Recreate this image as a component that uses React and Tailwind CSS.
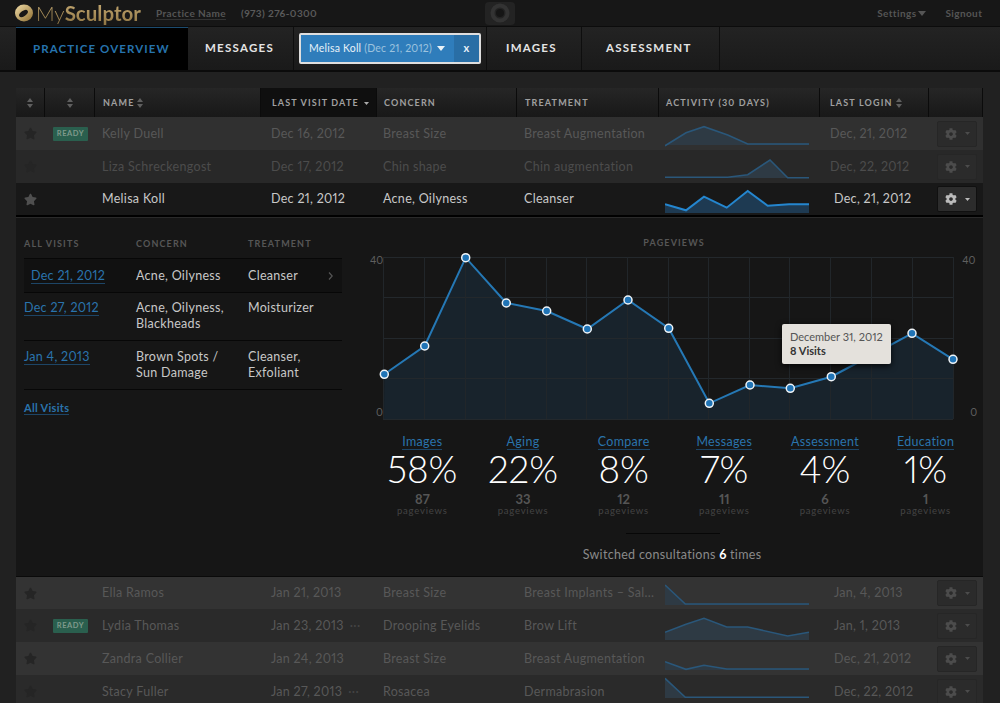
import React from "react";
import { FaCog, FaStar } from "react-icons/fa";

const font = { fontFamily: '"Lato", "Liberation Sans", sans-serif' };

function Sort({ c = "#666" }) {
  return (
    <svg width="6" height="10" viewBox="0 0 6 10" className="shrink-0">
      <path d="M3 0 L6 4 L0 4 Z M3 10 L6 6 L0 6 Z" fill={c} />
    </svg>
  );
}

function Spark({ pts, bottom = 32, strong }) {
  const line = pts.map((p) => p.join(",")).join(" ");
  const area = `0,${bottom} ${line} 144,${bottom}`;
  return (
    <svg width="146" height="33" viewBox="0 0 146 33" className="block">
      <polygon points={area} fill={strong ? "#1e3a52" : "#2e3a44"} />
      <polyline points={line} fill="none" stroke={strong ? "#2486cf" : "#2a577a"} strokeWidth={strong ? 2 : 1.6} />
    </svg>
  );
}

function GearButton({ strong }) {
  return (
    <div className={`flex h-[26px] w-[40px] items-center justify-center gap-[8px] rounded-[2px] border ${strong ? "border-[#101010] bg-[#2c2c2c] text-[#bbb]" : "border-[#262626] bg-[#2b2b2b] text-[#4c4c4c]"}`}>
      <FaCog size={12} />
      <svg width="5" height="3" viewBox="0 0 5 3"><path d="M0 0H5L2.500 3Z" fill="currentColor" /></svg>
    </div>
  );
}

function Row({ row }) {
  const s = row.selected;
  const txt = s ? "text-[#c8c8c8]" : row.faint ? "text-[#4c4c4c]" : "text-[#585858]";
  return (
    <div className={`flex items-center text-[12.500px] tracking-[0.3px] ${row.h} ${row.bg} ${txt}`}>
      <div className={`flex w-[29px] justify-center pr-[1px] ${s ? "text-[#4f4f4f]" : "text-[#252525]"}`}><FaStar size={13} /></div>
      <div className="w-[50px] pl-[8px]">
        {row.ready && (
          <div className="flex h-[14px] w-[35px] items-center justify-center rounded-[1px] bg-[#2a5f4e] text-[7.500px] font-bold tracking-[0.6px] text-[#7f9a8c]">READY</div>
        )}
      </div>
      <div className="w-[166px] pl-[7px] pt-[1px]">{row.name}</div>
      <div className="flex w-[116px] items-center pl-[10px] pt-[1px]">
        <span>{row.date}</span>
        {row.dots && <span className="ml-[6px] leading-none text-[#444]">···</span>}
      </div>
      <div className="w-[140px] pl-[6px] pt-[1px]">{row.concern}</div>
      <div className="w-[142px] truncate pl-[7px] pt-[1px]">{row.treatment}</div>
      <div className="w-[161px] pl-[6px]"><Spark pts={row.pts} strong={s} bottom={row.bottom} /></div>
      <div className={`w-[109px] pt-[1px] ${row.loginPl}`}>{row.login}</div>
      <div className="w-[54px] pl-[8px]"><GearButton strong={s} /></div>
    </div>
  );
}

const topRows = [
  { name: "Kelly Duell", ready: true, date: "Dec 16, 2012", concern: "Breast Size", treatment: "Breast Augmentation", login: "Dec, 21, 2012", loginPl: "pl-[10px]", h: "h-[33px]", bg: "bg-[#303030]", bottom: 28,
    pts: [[0, 28.7], [21, 15.7], [39, 9.7], [62.7, 18], [82.7, 27], [144, 27]] },
  { name: "Liza Schreckengost", faint: true, date: "Dec 17, 2012", concern: "Chin shape", treatment: "Chin augmentation", login: "Dec, 22, 2012", loginPl: "pl-[10px]", h: "h-[33px]", bg: "bg-[#282828]", bottom: 28,
    pts: [[0, 27.3], [62.7, 27.3], [82.7, 24.7], [105, 10], [122.7, 27.7], [144, 27.7]] },
  { name: "Melisa Koll", selected: true, date: "Dec 21, 2012", concern: "Acne, Oilyness", treatment: "Cleanser", login: "Dec, 21, 2012", loginPl: "pl-[14px]", h: "h-[32px]", bg: "bg-[#181818]", bottom: 30,
    pts: [[0, 21.3], [21, 27.3], [39, 13.7], [61.7, 24.7], [82.7, 8], [102.7, 22.7], [124, 21.3], [144, 21.3]] },
];

const bottomRows = [
  { name: "Ella Ramos", date: "Jan 21, 2013", concern: "Breast Size", treatment: "Breast Implants – Sal...", login: "Jan, 4, 2013", loginPl: "pl-[14px]", h: "h-[32px]", bg: "bg-[#333333]", bottom: 28,
    pts: [[0, 8], [20.3, 27], [144, 27]] },
  { name: "Lydia Thomas", ready: true, dots: true, date: "Jan 23, 2013", concern: "Drooping Eyelids", treatment: "Brow Lift", login: "Jan, 1, 2013", loginPl: "pl-[14px]", h: "h-[33px]", bg: "bg-[#2a2a2a]", bottom: 31,
    pts: [[0, 23.3], [21, 15.3], [39, 9.3], [61.7, 18], [82.7, 18], [122.7, 27], [144, 23.3]] },
  { name: "Zandra Collier", date: "Jan 24, 2013", concern: "Breast Size", treatment: "Breast Augmentation", login: "Dec, 21, 2012", loginPl: "pl-[14px]", h: "h-[33px]", bg: "bg-[#333333]", bottom: 28,
    pts: [[0, 19.7], [21, 27.3], [39, 23.3], [61.7, 27], [144, 27]] },
  { name: "Stacy Fuller", dots: true, date: "Jan 27, 2013", concern: "Rosacea", treatment: "Dermabrasion", login: "Dec, 22, 2012", loginPl: "pl-[14px]", h: "h-[33px]", bg: "bg-[#2a2a2a]", bottom: 23,
    pts: [[0, 3.3], [20.3, 22.3], [144, 22.3]] },
];

const heads = [
  { w: "w-[29px]", sort: true, center: true },
  { w: "w-[50px]", sort: true, center: true },
  { w: "w-[166px]", label: "NAME", sort: true, pl: "pl-[8px]" },
  { w: "w-[116px]", label: "LAST VISIT DATE", active: true, pl: "pl-[11px]" },
  { w: "w-[140px]", label: "CONCERN", pl: "pl-[7px]" },
  { w: "w-[142px]", label: "TREATMENT", pl: "pl-[8px]" },
  { w: "w-[161px]", label: "ACTIVITY (30 DAYS)", pl: "pl-[7px]" },
  { w: "w-[109px]", label: "LAST LOGIN", sort: true, pl: "pl-[10px]" },
  { w: "w-[54px]" },
];

function Header() {
  return (
    <div className="flex h-[29px] bg-[#141414]">
      {heads.map((h, i) => (
        <div
          key={i}
          className={`flex items-center gap-[3px] whitespace-nowrap border-r border-[#0b0b0b] pt-[1px] text-[9px] font-bold tracking-[1.150px] text-[#a0a0a0] ${h.w} ${h.pl || ""} ${h.center ? "justify-center" : ""} ${h.active ? "bg-[#0f0f0f]" : "bg-gradient-to-b from-[#262626] to-[#181818]"}`}
        >
          {h.label && <span>{h.label}</span>}
          {h.sort && <Sort c="#5f5f5f" />}
          {h.active && (
            <svg width="5" height="3" viewBox="0 0 5 3" className="ml-[2px]"><path d="M0 0H5L2.500 3Z" fill="#aaa" /></svg>
          )}
        </div>
      ))}
    </div>
  );
}

const visits = [
  { d: "Dec 21, 2012", c: ["Acne, Oilyness"], t: ["Cleanser"], active: true, cls: "h-[34px] items-center bg-[#111111]" },
  { d: "Dec 27, 2012", c: ["Acne, Oilyness,", "Blackheads"], t: ["Moisturizer"], cls: "pb-[8px] pt-[7px]" },
  { d: "Jan 4, 2013", c: ["Brown Spots /", "Sun Damage"], t: ["Cleanser,", "Exfoliant"], cls: "pb-[8px] pt-[8px]" },
];

function Visits() {
  return (
    <div className="w-[318px] shrink-0">
      <div className="flex h-[40px] items-start pt-[21px] text-[9px] font-bold leading-[10px] tracking-[1.150px] text-[#565656]">
        <div className="w-[112px]">ALL VISITS</div>
        <div className="w-[112px]">CONCERN</div>
        <div>TREATMENT</div>
      </div>
      <div className="border-t border-[#070707]">
        {visits.map((v) => (
          <div
            key={v.d}
            className={`flex border-b border-[#070707] text-[12.500px] leading-[16px] tracking-[0.3px] text-[#c8c8c8] ${v.cls}`}
          >
            <div className={`w-[112px] ${v.active ? "pl-[7px]" : ""}`}>
              <span className="border-b border-[#1d4566] text-[#2a74ad]">{v.d}</span>
            </div>
            <div className="w-[112px]">{v.c.map((x) => <div key={x}>{x}</div>)}</div>
            <div className="flex-1">{v.t.map((x) => <div key={x}>{x}</div>)}</div>
            {v.active && (
              <svg width="5" height="8" viewBox="0 0 5 8" className="mr-[9px]"><path d="M1 0.500L4.200 4L1 7.500" fill="none" stroke="#555" strokeWidth="1.200" /></svg>
            )}
          </div>
        ))}
      </div>
      <div className="mt-[10px] text-[11px] font-bold tracking-[0.3px] text-[#2a74ad]">
        <span className="border-b border-[#1d4566]">All Visits</span>
      </div>
    </div>
  );
}

/* chart coordinates: origin at page (388, 258) */
const chartPts = [
  [1.3, 117.3], [41.7, 89], [82.7, 0.7], [123.3, 46], [163.7, 54], [204.3, 72], [245, 43], [285.7, 71.3],
  [326.3, 146.3], [367, 128], [407.3, 131.3], [448.3, 119.7], [489, 98], [529, 76.3], [570, 102.3],
];

function Chart() {
  const line = chartPts.map((p) => p.join(",")).join(" ");
  return (
    <div className="relative ml-[46px] w-[572px] pt-[20px]">
      <div className="text-center text-[9px] font-bold leading-[10px] tracking-[1.150px] text-[#565656]">PAGEVIEWS</div>
      <div className="mt-[4px] flex text-[10.500px] leading-[12px] text-[#5f5f5f]">
        <div className="-ml-[16px] flex h-[170px] w-[16px] flex-col justify-between pb-[4px] pt-[2px]">
          <div className="-ml-[2px]">40</div>
          <div className="ml-[4px]">0</div>
        </div>
        <svg width="574" height="166" viewBox="0 0 574 166" className="mt-[5px] block shrink-0 overflow-visible">
          <polygon points={`1,162 ${line} 570,162`} fill="#18232c" />
          {[0, 40, 81, 121, 162].map((y) => (
            <line key={y} x1="0" x2="570" y1={y + 0.5} y2={y + 0.5} stroke="#23282c" />
          ))}
          {[0, 41, 82, 122, 163, 203, 244, 285, 325, 366, 406, 447, 488, 529, 570].map((x) => (
            <line key={x} x1={x + 0.5} x2={x + 0.5} y1="0" y2="162" stroke="#21262a" />
          ))}
          <polyline points={line} fill="none" stroke="#2578b5" strokeWidth="2" />
          {chartPts.map((p, i) => (
            <circle key={i} cx={p[0]} cy={p[1]} r="4" fill="#2074b6" stroke="#f0f4f7" strokeWidth="1.500" />
          ))}
        </svg>
        <div className="flex h-[170px] flex-col justify-between pb-[4px] pl-[5px] pt-[2px]">
          <div>40</div>
          <div className="ml-[8px]">0</div>
        </div>
      </div>
      <div className="absolute left-[394px] top-[106px] h-[40px] w-[109px] rounded-[2px] bg-[#e4e1dc] pl-[8px] pt-[6px] text-[11px] leading-[14px] text-[#555] shadow-[0_2px_6px_rgba(0,0,0,0.8)]">
        <div>December 31, 2012</div>
        <div className="font-bold text-[#333]">8 Visits</div>
      </div>
    </div>
  );
}

const stats = [
  ["Images", "58%", "87"], ["Aging", "22%", "33"], ["Compare", "8%", "12"],
  ["Messages", "7%", "11"], ["Assessment", "4%", "6"], ["Education", "1%", "1"],
];

function Stats() {
  return (
    <div className="ml-[30px] mt-[11px] grid w-[604px] grid-cols-6 text-center">
      {stats.map(([l, p, n]) => (
        <div key={l} className="flex flex-col items-center">
          <span className="border-b border-[#1d4566] text-[12.500px] leading-[15px] tracking-[0.3px] text-[#2a74ad]">{l}</span>
          <div className="-mt-[1px] text-[37px] font-light leading-[40px] text-white">{p}</div>
          <div className="mt-[3px] text-[13px] font-bold leading-[14px] text-[#555]">{n}</div>
          <div className="text-[9.500px] leading-[10px] tracking-[0.8px] text-[#444]">pageviews</div>
        </div>
      ))}
    </div>
  );
}

function Panel() {
  return (
    <div className="h-[359px] border-b border-[#0a0a0a] bg-[#161616] pl-[8px]">
      <div className="flex">
        <Visits />
        <div className="w-[641px]">
          <Chart />
          <Stats />
          <div className="ml-[284px] mt-[17px] h-px w-[94px] bg-[#070707]" />
          <div className="ml-[19px] mt-[12px] text-center text-[12.500px] tracking-[0.3px] text-[#8a8a8a]">
            Switched consultations <b className="font-bold text-white">6</b> times
          </div>
        </div>
      </div>
    </div>
  );
}

function Tab({ w, children, pl }) {
  return (
    <div className={`flex h-full items-center border-r border-[#0e0e0e] pb-[1px] text-[11.500px] font-bold tracking-[1.250px] text-[#e4e4e4] ${w} ${pl}`}>{children}</div>
  );
}

export default function App() {
  return (
    <div style={font} className="h-[703px] w-[1000px] overflow-hidden bg-[#212121] [font-variant-numeric:proportional-nums]">
      <div className="flex h-[27px] items-center border-b border-[#0c0c0c] bg-[#171717]">
        <svg width="20" height="22" viewBox="0 0 20 22" className="ml-[14px] shrink-0">
          <defs>
            <linearGradient id="g" x1="0" y1="0" x2="1" y2="1">
              <stop offset="0" stopColor="#f0dca8" />
              <stop offset="1" stopColor="#8d6d30" />
            </linearGradient>
          </defs>
          <ellipse cx="10" cy="11" rx="9" ry="8.500" fill="url(#g)" />
          <ellipse cx="9.500" cy="11.500" rx="5" ry="2.600" transform="rotate(-35 9.500 11.500)" fill="#171717" />
        </svg>
        <div className="ml-[2px] w-[107px] whitespace-nowrap bg-gradient-to-b from-[#c8ad76] to-[#8f7543] bg-clip-text text-[20.500px] leading-[24px] text-transparent">
          <span className="font-light">My</span><span className="font-bold">Sculptor</span>
        </div>
        <span className="ml-[13px] border-b border-[#333] text-[10px] font-bold leading-[12px] tracking-[0.4px] text-[#555]">Practice Name</span>
        <span className="ml-[15px] text-[10px] font-bold tracking-[0.4px] text-[#5a5a5a]">(973) 276-0300</span>
        <div className="ml-[168px] flex h-[23px] w-[30px] items-center justify-center rounded-[4px] bg-[#232323]">
          <svg width="24" height="20" viewBox="0 0 24 20">
            <circle cx="12" cy="10" r="7.500" fill="none" stroke="#333" strokeWidth="4" />
            <circle cx="12" cy="10" r="4" fill="#151515" />
          </svg>
        </div>
        <span className="ml-[362px] text-[10px] font-bold tracking-[0.4px] text-[#555]">Settings</span>
        <svg width="8" height="5" viewBox="0 0 8 5" className="ml-[2px]"><path d="M0 0H8L4 5Z" fill="#555" /></svg>
        <span className="ml-[19px] text-[10px] font-bold tracking-[0.4px] text-[#555]">Signout</span>
      </div>

      <div className="flex h-[45px] border-b-2 border-[#0b0b0b] bg-gradient-to-b from-[#232323] to-[#1a1a1a] pl-[16px]">
        <div className="flex h-full w-[172px] items-center border-t border-[#1c4c70] bg-black pb-[1px] pl-[17px] text-[11.500px] font-bold tracking-[1.100px] text-[#2673ad]">PRACTICE OVERVIEW</div>
        <Tab w="w-[106px]" pl="pl-[17px]">MESSAGES</Tab>
        <div className="flex h-full w-[193px] items-center justify-center border-r border-[#0e0e0e]">
          <div className="flex h-[31px] w-[182px] overflow-hidden rounded-[2px] border-2 border-[#dedede] bg-[#2f7dbb] text-[10.500px] tracking-[0.2px] text-[#e8f2f8]">
            <div className="flex flex-1 items-center pl-[8px]">
              <span>Melisa Koll</span>
              <span className="ml-[3px] text-[#9cc3df]">(Dec 21, 2012)</span>
              <svg width="8" height="5" viewBox="0 0 8 5" className="ml-[5px]"><path d="M0 0H8L4 5Z" fill="#e8f2f8" /></svg>
            </div>
            <div className="flex w-[25px] items-center justify-center bg-[#296ea5] text-[11px] font-bold">x</div>
          </div>
        </div>
        <Tab w="w-[95px]" pl="pl-[19px]">IMAGES</Tab>
        <Tab w="w-[138px]" pl="pl-[24px]">ASSESSMENT</Tab>
      </div>

      <div className="ml-[16px] mt-[16px] w-[967px]">
        <Header />
        {topRows.map((r) => <Row key={r.name} row={r} />)}
        <div className="h-[2px] bg-black" />
        <div className="h-px bg-[#2a2a2a]" />
        <Panel />
        {bottomRows.map((r) => <Row key={r.name} row={r} />)}
      </div>
    </div>
  );
}
